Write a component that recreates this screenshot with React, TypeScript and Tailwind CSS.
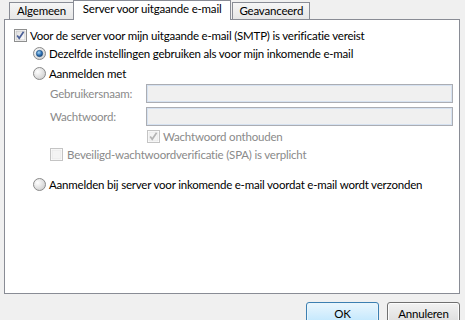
import React from "react";

const font = { fontFamily: 'Lato, "Noto Sans", sans-serif', letterSpacing: "-0.2px" };

function Check({ checked, disabled }: { checked?: boolean; disabled?: boolean }) {
  return (
    <svg width="13" height="13" viewBox="0 0 13 13" className="shrink-0">
      <defs>
        <linearGradient id={disabled ? "cbd" : "cb"} x1="0" y1="0" x2="1" y2="1">
          <stop offset="0" stopColor={disabled ? "#f4f4f4" : "#dcdcdc"} />
          <stop offset="1" stopColor={disabled ? "#f4f4f4" : "#ffffff"} />
        </linearGradient>
      </defs>
      <rect x="0.5" y="0.5" width="12" height="12" fill="#fff" stroke={disabled ? "#c4c4c4" : "#8e8f8f"} />
      <rect x="2" y="2" width="9" height="9" fill={`url(#${disabled ? "cbd" : "cb"})`} stroke={disabled ? "#e2e2e2" : "#b6b6b6"} strokeWidth="0.6" />
      {checked && (
        <path d="M3.2 6.6 L5.2 9.2 L9.6 2.8" fill="none" stroke={disabled ? "#b4b4b4" : "#4a5f97"} strokeWidth="1.7" />
      )}
    </svg>
  );
}

function Radio({ checked }: { checked?: boolean }) {
  return (
    <svg width="13" height="13" viewBox="0 0 13 13" className="shrink-0">
      <defs>
        <radialGradient id="rg" cx="0.35" cy="0.35" r="0.8">
          <stop offset="0" stopColor="#ffffff" />
          <stop offset="1" stopColor="#c9c9c9" />
        </radialGradient>
        <radialGradient id="rb" cx="0.4" cy="0.35" r="0.7">
          <stop offset="0" stopColor="#a8d7f5" />
          <stop offset="0.6" stopColor="#2b6fb4" />
          <stop offset="1" stopColor="#163d6b" />
        </radialGradient>
      </defs>
      <circle cx="6.5" cy="6.5" r="6" fill="url(#rg)" stroke="#8a8a8a" />
      {checked && <circle cx="6.5" cy="6.5" r="3.2" fill="url(#rb)" stroke="#1d4f80" strokeWidth="0.6" />}
    </svg>
  );
}

function Input() {
  return (
    <div className="h-[19px] flex-1 border border-[#abadb3] bg-[#f0f0f0] shadow-[inset_0_0_0_1px_#d6e2f1]" />
  );
}

export default function App() {
  return (
    <div className="w-[465px] h-[320px] bg-[#f0f0f0] overflow-hidden text-[11.5px] text-black relative whitespace-nowrap" style={font}>
      <div className="flex items-end pl-[9px] h-[19px]">
        <div className="h-[17px] px-[7px] flex items-center border border-b-0 border-[#898c95] bg-gradient-to-b from-[#f6f6f6] to-[#e6e6e6] leading-none">
          Algemeen
        </div>
        <div className="h-[20px] -mb-px relative z-10 px-[9px] flex items-start pt-[1px] border border-b-0 border-[#898c95] bg-white leading-none -ml-px">
          <span className="mt-[1px]">Server voor uitgaande e-mail</span>
        </div>
        <div className="h-[17px] px-[6px] flex items-center border border-b-0 border-[#898c95] bg-gradient-to-b from-[#f6f6f6] to-[#e6e6e6] leading-none ml-px">
          Geavanceerd
        </div>
      </div>
      <div className="ml-[4px] w-[456px] h-[275px] border border-[#898c95] bg-white pl-[9px] pt-[9px] pr-[6px]">
        <div className="flex items-center gap-[3px] h-[13px]">
          <Check checked />
          <span>Voor de server voor mijn uitgaande e-mail (SMTP) is verificatie vereist</span>
        </div>
        <div className="pl-[19px]">
          <div className="flex items-center gap-[3px] h-[13px] mt-[5px]">
            <Radio checked />
            <span>Dezelfde instellingen gebruiken als voor mijn inkomende e-mail</span>
          </div>
          <div className="flex items-center gap-[3px] h-[13px] mt-[7px]">
            <Radio />
            <span>Aanmelden met</span>
          </div>
          <div className="pl-[17px] text-[#8a8a8a]">
            <div className="flex items-center mt-[4px]">
              <span className="w-[96px]">Gebruikersnaam:</span>
              <Input />
            </div>
            <div className="flex items-center mt-[4px]">
              <span className="w-[96px]">Wachtwoord:</span>
              <Input />
            </div>
            <div className="flex items-center gap-[3px] h-[13px] mt-[4px] ml-[97px]">
              <Check checked disabled />
              <span>Wachtwoord onthouden</span>
            </div>
            <div className="flex items-center gap-[4px] h-[13px] mt-[5px]">
              <Check disabled />
              <span>Beveiligd-wachtwoordverificatie (SPA) is verplicht</span>
            </div>
          </div>
          <div className="flex items-center gap-[3px] h-[13px] mt-[17px]">
            <Radio />
            <span>Aanmelden bij server voor inkomende e-mail voordat e-mail wordt verzonden</span>
          </div>
        </div>
      </div>
      <div className="flex justify-end gap-[8px] pr-[5px] mt-[8px]">
        <div className="w-[73px] h-[23px] rounded-[3px] border border-[#3c7fb1] bg-gradient-to-b from-[#eaf6fd] to-[#bee6fd] shadow-[inset_0_0_0_1px_#e8f5fc] flex items-center justify-center">
          OK
        </div>
        <div className="w-[73px] h-[23px] rounded-[3px] border border-[#707070] bg-gradient-to-b from-[#f2f2f2] to-[#dcdcdc] shadow-[inset_0_0_0_1px_#fcfcfc] flex items-center justify-center">
          Annuleren
        </div>
      </div>
    </div>
  );
}
